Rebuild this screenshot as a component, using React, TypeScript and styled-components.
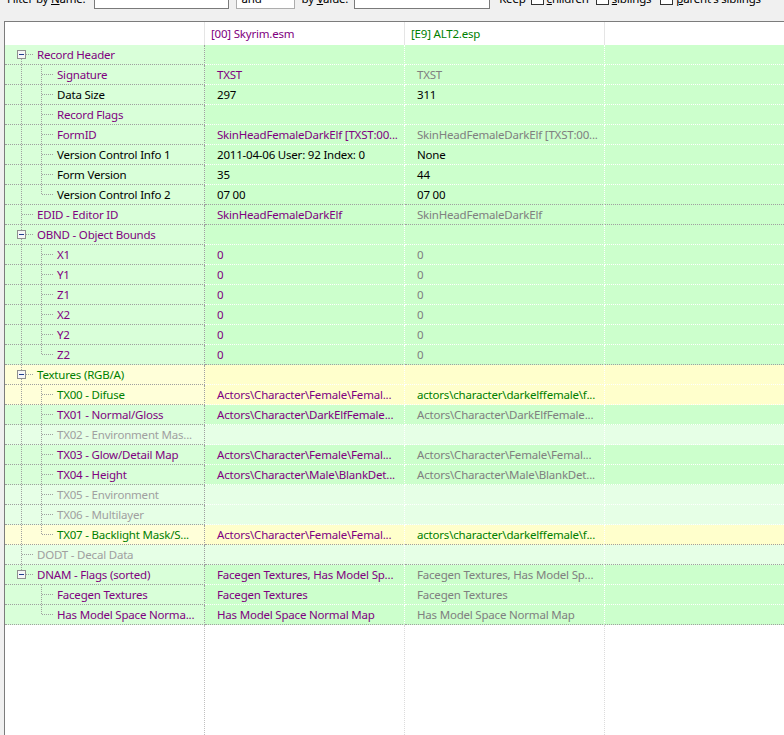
import React from "react";
import styled, { createGlobalStyle } from "styled-components";

const P = "#800080";
const K = "#000000";
const G = "#008000";
const N = "#a0a0a0";
const V = "#808080";

type Tone = "green" | "yellow" | "light";

const toneBg: Record<Tone, [string, string]> = {
  green: ["#d9ffd9", "#ccffcc"],
  yellow: ["#ffffd9", "#ffffcc"],
  light: ["#e6ffe6", "#e6ffe6"],
};

interface Node {
  name: string;
  color: string;
  tone: Tone;
  v1?: string;
  c1?: string;
  v2?: string;
  c2?: string;
  children?: Node[];
}

const tree: Node[] = [
  {
    name: "Record Header", color: P, tone: "green",
    children: [
      { name: "Signature", color: P, tone: "green", v1: "TXST", c1: P, v2: "TXST", c2: V },
      { name: "Data Size", color: K, tone: "green", v1: "297", c1: K, v2: "311", c2: K },
      { name: "Record Flags", color: P, tone: "green" },
      { name: "FormID", color: P, tone: "green", v1: "SkinHeadFemaleDarkElf [TXST:00...", c1: P, v2: "SkinHeadFemaleDarkElf [TXST:00...", c2: V },
      { name: "Version Control Info 1", color: K, tone: "green", v1: "2011-04-06 User: 92 Index: 0", c1: K, v2: "None", c2: K },
      { name: "Form Version", color: K, tone: "green", v1: "35", c1: K, v2: "44", c2: K },
      { name: "Version Control Info 2", color: K, tone: "green", v1: "07 00", c1: K, v2: "07 00", c2: K },
    ],
  },
  { name: "EDID - Editor ID", color: P, tone: "green", v1: "SkinHeadFemaleDarkElf", c1: P, v2: "SkinHeadFemaleDarkElf", c2: V },
  {
    name: "OBND - Object Bounds", color: P, tone: "green",
    children: ["X1", "Y1", "Z1", "X2", "Y2", "Z2"].map((n) => ({
      name: n, color: P, tone: "green" as Tone, v1: "0", c1: P, v2: "0", c2: V,
    })),
  },
  {
    name: "Textures (RGB/A)", color: G, tone: "yellow",
    children: [
      { name: "TX00 - Difuse", color: G, tone: "yellow", v1: "Actors\\Character\\Female\\Femal...", c1: P, v2: "actors\\character\\darkelffemale\\f...", c2: G },
      { name: "TX01 - Normal/Gloss", color: P, tone: "green", v1: "Actors\\Character\\DarkElfFemale...", c1: P, v2: "Actors\\Character\\DarkElfFemale...", c2: V },
      { name: "TX02 - Environment Mas...", color: N, tone: "light" },
      { name: "TX03 - Glow/Detail Map", color: P, tone: "green", v1: "Actors\\Character\\Female\\Femal...", c1: P, v2: "Actors\\Character\\Female\\Femal...", c2: V },
      { name: "TX04 - Height", color: P, tone: "green", v1: "Actors\\Character\\Male\\BlankDet...", c1: P, v2: "Actors\\Character\\Male\\BlankDet...", c2: V },
      { name: "TX05 - Environment", color: N, tone: "light" },
      { name: "TX06 - Multilayer", color: N, tone: "light" },
      { name: "TX07 - Backlight Mask/S...", color: G, tone: "yellow", v1: "Actors\\Character\\Female\\Femal...", c1: P, v2: "actors\\character\\darkelffemale\\f...", c2: G },
    ],
  },
  { name: "DODT - Decal Data", color: N, tone: "light" },
  {
    name: "DNAM - Flags (sorted)", color: P, tone: "green", v1: "Facegen Textures, Has Model Sp...", c1: P, v2: "Facegen Textures, Has Model Sp...", c2: V,
    children: [
      { name: "Facegen Textures", color: P, tone: "green", v1: "Facegen Textures", c1: P, v2: "Facegen Textures", c2: V },
      { name: "Has Model Space Norma...", color: P, tone: "green", v1: "Has Model Space Normal Map", c1: P, v2: "Has Model Space Normal Map", c2: V },
    ],
  },
];

interface FlatRow {
  node: Node;
  depth: 0 | 1;
  first: boolean;
  last: boolean;
  parentLast: boolean;
  groupEnd: boolean;
}

function flatten(): FlatRow[] {
  const out: FlatRow[] = [];
  tree.forEach((root, i) => {
    const lastRoot = i === tree.length - 1;
    const kids = root.children || [];
    out.push({ node: root, depth: 0, first: i === 0, last: lastRoot, parentLast: false, groupEnd: kids.length === 0 });
    kids.forEach((k, j) => {
      out.push({ node: k, depth: 1, first: j === 0, last: j === kids.length - 1, parentLast: lastRoot, groupEnd: j === kids.length - 1 });
    });
  });
  return out;
}

const GlobalStyle = createGlobalStyle`
  html, body { margin: 0; padding: 0; }
  body {
    background: #f0f0f0;
    font-family: "Noto Sans", "Open Sans", sans-serif;
    font-size: 11.5px;
    letter-spacing: -0.2px;
    color: #000;
    overflow: hidden;
  }
`;

const Page = styled.div`
  width: 784px;
  height: 735px;
  display: flex;
  flex-direction: column;
  overflow: hidden;
  background: #f0f0f0;
`;

const Toolbar = styled.div`
  height: 21px;
  flex: none;
  overflow: hidden;
`;

const ToolbarRow = styled.div`
  display: flex;
  align-items: center;
  height: 22px;
  margin-top: -13px;
  padding-left: 7px;
  white-space: nowrap;
`;

const Label = styled.span<{ $gap?: number }>`
  margin-left: ${(p) => p.$gap ?? 0}px;
`;

const TextBox = styled.div<{ $w: number; $gap: number }>`
  width: ${(p) => p.$w}px;
  height: 22px;
  margin-left: ${(p) => p.$gap}px;
  flex: none;
  box-sizing: border-box;
  border: 1px solid #7a7a7a;
  background: #fff;
`;

const Combo = styled.div`
  width: 59px;
  height: 22px;
  margin-left: 7px;
  flex: none;
  box-sizing: border-box;
  border: 1px solid #adadad;
  background: #fff;
  display: flex;
  align-items: center;
  justify-content: space-between;
  padding: 0 5px;
`;

const Check = styled.span<{ $gap: number }>`
  width: 13px;
  height: 13px;
  flex: none;
  margin-left: ${(p) => p.$gap}px;
  margin-right: 3px;
  box-sizing: border-box;
  border: 1px solid #333;
  background: #fff;
`;

const Panel = styled.div`
  flex: 1;
  min-height: 0;
  margin-left: 4px;
  border-top: 1px solid #7c7c7c;
  border-left: 1px solid #7c7c7c;
  background: #fff;
  display: flex;
  flex-direction: column;
  overflow: hidden;
`;

const GridRow = styled.div<{ $fill?: boolean }>`
  display: grid;
  grid-template-columns: 200px 200px 200px 1fr;
  flex: ${(p) => (p.$fill ? 1 : "none")};
`;

const HeaderCell = styled.div<{ $color?: string; $divider?: boolean }>`
  height: 23px;
  line-height: 23px;
  padding-left: 6px;
  color: ${(p) => p.$color || "#000"};
  border-right: ${(p) => (p.$divider ? "1px solid #e5e5e5" : "none")};
  white-space: nowrap;
  overflow: hidden;
`;

const Cell = styled.div<{ $bg: string; $line: string; $vline?: string; $pad?: number; $color?: string }>`
  height: 20px;
  box-sizing: border-box;
  display: flex;
  align-items: center;
  padding-left: ${(p) => p.$pad ?? 0}px;
  background: ${(p) => p.$bg};
  color: ${(p) => p.$color || "#000"};
  border-bottom: 1px dotted ${(p) => p.$line};
  border-right: ${(p) => (p.$vline ? `1px dotted ${p.$vline}` : "none")};
  white-space: nowrap;
  overflow: hidden;
`;

const FillCell = styled.div<{ $vline?: string }>`
  border-right: ${(p) => (p.$vline ? `1px dotted ${p.$vline}` : "none")};
`;

const NodeName = styled.span<{ $color: string }>`
  color: ${(p) => p.$color};
`;

const LINE = "#a0a0a0";

function Dots({ x1, y1, x2, y2 }: { x1: number; y1: number; x2: number; y2: number }) {
  return <line x1={x1} y1={y1} x2={x2} y2={y2} stroke={LINE} strokeDasharray="1 1" shapeRendering="crispEdges" />;
}

function Gutter({ row }: { row: FlatRow }) {
  if (row.depth === 0) {
    const expandable = !!row.node.children;
    return (
      <svg width={32} height={19} style={{ flex: "none" }}>
        {expandable ? (
          <>
            {!row.first && <Dots x1={16.5} y1={0} x2={16.5} y2={5} />}
            {!row.last && <Dots x1={16.5} y1={14} x2={16.5} y2={19} />}
            <rect x={12.5} y={5.5} width={8} height={8} fill="#f6f6f6" stroke="#8f8f8f" shapeRendering="crispEdges" />
            <rect x={14} y={9} width={5} height={1} fill="#1f3f8f" />
            <Dots x1={21} y1={9.5} x2={29} y2={9.5} />
          </>
        ) : (
          <>
            <Dots x1={16.5} y1={0} x2={16.5} y2={row.last ? 10 : 19} />
            <Dots x1={17} y1={9.5} x2={29} y2={9.5} />
          </>
        )}
      </svg>
    );
  }
  return (
    <svg width={52} height={19} style={{ flex: "none" }}>
      {!row.parentLast && <Dots x1={16.5} y1={0} x2={16.5} y2={19} />}
      <Dots x1={36.5} y1={0} x2={36.5} y2={row.last ? 10 : 19} />
      <Dots x1={37} y1={9.5} x2={48} y2={9.5} />
    </svg>
  );
}

export default function App() {
  const rows = flatten();
  return (
    <Page>
      <GlobalStyle />
      <Toolbar>
        <ToolbarRow>
          <Label>Filter by <u>N</u>ame:</Label>
          <TextBox $w={135} $gap={8} />
          <Combo>
            <span>and</span>
            <svg width={8} height={5}>
              <path d="M0.5 0.5 L4 4 L7.5 0.5" fill="none" stroke="#606060" />
            </svg>
          </Combo>
          <Label $gap={7}>by <u>V</u>alue:</Label>
          <TextBox $w={136} $gap={6} />
          <Label $gap={9}>Keep</Label>
          <Check $gap={5} />
          <Label><u>c</u>hildren</Label>
          <Check $gap={7} />
          <Label><u>s</u>iblings</Label>
          <Check $gap={9} />
          <Label><u>p</u>arent's siblings</Label>
        </ToolbarRow>
      </Toolbar>
      <Panel>
        <GridRow>
          <HeaderCell $divider />
          <HeaderCell $divider $color={P}>[00] Skyrim.esm</HeaderCell>
          <HeaderCell $divider $color={G}>[E9] ALT2.esp</HeaderCell>
          <HeaderCell />
        </GridRow>
        {rows.map((r, i) => {
          const [bg1, bg2] = toneBg[r.node.tone];
          const sep = r.groupEnd ? LINE : "#ffffff";
          return (
            <GridRow key={i}>
              <Cell $bg={bg1} $line={LINE} $vline={LINE}>
                <Gutter row={r} />
                <NodeName $color={r.node.color}>{r.node.name}</NodeName>
              </Cell>
              <Cell $bg={bg2} $line={sep} $vline="#ffffff" $pad={12} $color={r.node.c1}>
                {r.node.v1}
              </Cell>
              <Cell $bg={bg2} $line={sep} $vline="#ffffff" $pad={12} $color={r.node.c2}>
                {r.node.v2}
              </Cell>
              <Cell $bg={bg2} $line={sep} />
            </GridRow>
          );
        })}
        <GridRow $fill>
          <FillCell $vline="#c0c0c0" />
          <FillCell $vline="#dcdcdc" />
          <FillCell $vline="#dcdcdc" />
          <FillCell />
        </GridRow>
      </Panel>
    </Page>
  );
}
